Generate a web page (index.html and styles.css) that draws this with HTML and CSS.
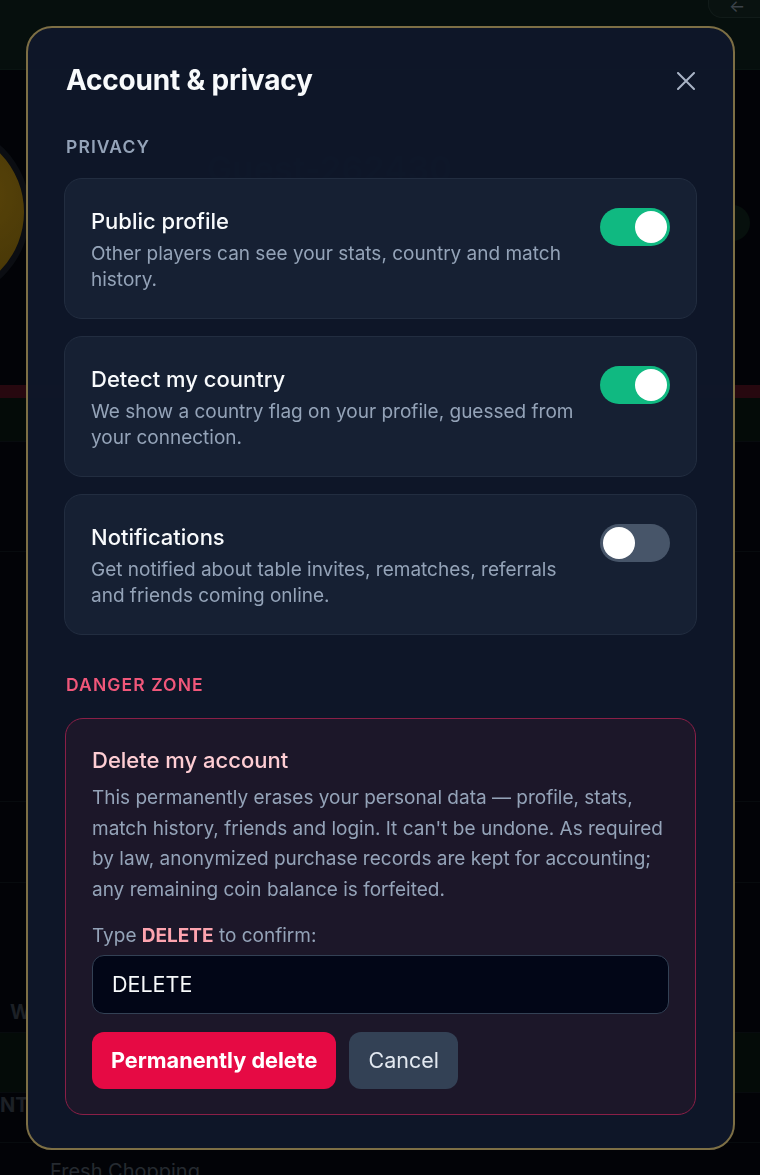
FILE: index.html
```html
<!DOCTYPE html>
<html lang="en">
<head>
    <meta charset="UTF-8">
    <meta name="viewport" content="width=device-width, initial-scale=1.0">
    <title>Account &amp; privacy</title>
    <link rel="stylesheet" href="styles.css">
</head>
<body>
    <div class="app">
        <header class="topbar">
            <div class="back-btn">&larr;</div>
        </header>
        <section class="profile">
            <div class="avatar"></div>
            <div class="profile-info">
                <div class="profile-name">Guest-262430</div>
            </div>
            <div class="profile-pill"></div>
        </section>
        <div class="hp-bar"></div>
        <div class="row row-green"></div>
        <div class="row"></div>
        <div class="stats"></div>
        <div class="row short-row"></div>
        <div class="row row-label w-row">W</div>
        <div class="row row-green short"></div>
        <div class="row row-label nt-row">NT</div>
        <div class="row row-item">Fresh Chopping</div>
    </div>

    <div class="backdrop">
        <div class="modal">
            <div class="modal-head">
                <h1>Account &amp; privacy</h1>
                <button class="close-btn" aria-label="Close">
                    <svg width="18" height="18" viewBox="0 0 18 18" fill="none" stroke="currentColor" stroke-width="2" stroke-linecap="round">
                        <path d="M1 1L17 17M17 1L1 17"/>
                    </svg>
                </button>
            </div>

            <h2 class="section-label">Privacy</h2>
            <div class="setting">
                <div class="setting-text">
                    <h3>Public profile</h3>
                    <p>Other players can see your stats, country and match history.</p>
                </div>
                <div class="toggle on"><span class="knob"></span></div>
            </div>
            <div class="setting">
                <div class="setting-text">
                    <h3>Detect my country</h3>
                    <p>We show a country flag on your profile, guessed from your connection.</p>
                </div>
                <div class="toggle on"><span class="knob"></span></div>
            </div>
            <div class="setting">
                <div class="setting-text">
                    <h3>Notifications</h3>
                    <p>Get notified about table invites, rematches, referrals and friends coming online.</p>
                </div>
                <div class="toggle"><span class="knob"></span></div>
            </div>

            <h2 class="section-label danger">Danger zone</h2>
            <div class="danger-box">
                <h3>Delete my account</h3>
                <p class="danger-desc">This permanently erases your personal data &mdash; profile, stats, match history, friends and login. It can't be undone. As required by law, anonymized purchase records are kept for accounting; any remaining coin balance is forfeited.</p>
                <label class="confirm-label" for="confirm">Type <strong>DELETE</strong> to confirm:</label>
                <input type="text" id="confirm" class="confirm-input" value="DELETE">
                <div class="actions">
                    <button class="btn btn-danger">Permanently delete</button>
                    <button class="btn btn-cancel">Cancel</button>
                </div>
            </div>
        </div>
    </div>
</body>
</html>
```

FILE: styles.css
```css
* {
    box-sizing: border-box;
}
body {
    margin: 0;
    background-color: #04060b;
    font-family: Inter, "Noto Sans", sans-serif;
    color: #f1f5f9;
    height: 1175px;
    overflow: hidden;
}

/* dimmed page behind the dialog */
.app {
    display: flex;
    flex-direction: column;
    height: 1175px;
    overflow: hidden;
}
.topbar {
    flex: none;
    height: 70px;
    background-color: #0a1714;
    border-bottom: 1px solid #0f201b;
    display: flex;
    justify-content: flex-end;
    align-items: flex-start;
}
.back-btn {
    width: 52px;
    height: 18px;
    padding-left: 20px;
    border-radius: 0 0 0 14px;
    background-color: #0e1c19;
    border-left: 1px solid #1b2a27;
    border-bottom: 1px solid #1b2a27;
    color: #5c6670;
    font-size: 17px;
    line-height: 12px;
}
.profile {
    flex: none;
    height: 310px;
    display: flex;
    align-items: flex-start;
    padding-top: 52px;
}
.avatar {
    flex: none;
    width: 180px;
    height: 180px;
    margin-left: -150px;
    border-radius: 50%;
    background: radial-gradient(circle at 70% 40%, #8a6a0e, #5a450a);
    border: 6px solid #11151c;
}
.profile-info {
    flex: 1;
    padding-left: 177px;
}
.profile-name {
    font-size: 34px;
    font-weight: 700;
    color: #18212e;
    margin-top: 26px;
}
.profile-pill {
    flex: none;
    margin-top: 83px;
    margin-right: 10px;
    width: 50px;
    height: 36px;
    border-radius: 18px;
    background-color: #0b1a14;
}
.hp-bar {
    flex: none;
    height: 13px;
    background-color: #3d0d18;
    margin-top: 5px;
}
.row {
    flex: none;
    height: 110px;
    border-bottom: 1px solid #0c1116;
}
.row-green {
    height: 44px;
    background-color: #07110d;
}
.stats {
    flex: none;
    height: 250px;
    border-bottom: 1px solid #0c1116;
}
.short-row {
    height: 81px;
}
.row-label {
    font-size: 20px;
    line-height: 24px;
    font-weight: 700;
    color: #2b323b;
    padding-left: 10px;
}
.w-row {
    height: 150px;
    padding-top: 117px;
}
.nt-row {
    height: 50px;
    padding-top: 0;
    padding-left: 0;
}
.short {
    height: 60px;
}
.row-item {
    height: 60px;
    padding: 16px 0 0 50px;
    font-size: 20px;
    color: #3a414a;
}

/* dialog */
.backdrop {
    position: fixed;
    inset: 0;
    background-color: rgba(0, 0, 0, 0.35);
}
.modal {
    position: absolute;
    top: 26px;
    left: 26px;
    width: 709px;
    height: 1124px;
    padding: 32px 36px;
    background-color: rgba(15, 23, 42, 0.96);
    border: 2px solid #7d6f45;
    border-radius: 26px;
}
.modal-head {
    display: flex;
    justify-content: space-between;
    align-items: center;
    height: 40px;
    margin-bottom: 36px;
    padding: 0 2px;
}
.modal-head h1 {
    margin: 0;
    font-size: 28px;
    font-weight: 700;
    color: #f8fafc;
    letter-spacing: -0.2px;
}
.close-btn {
    background: none;
    border: none;
    padding: 0;
    color: #a9b4c6;
    display: flex;
    margin-top: 2px;
}
.section-label {
    margin: 0 0 20px;
    padding-left: 2px;
    font-size: 17.5px;
    line-height: 22px;
    font-weight: 600;
    text-transform: uppercase;
    letter-spacing: 1.1px;
    color: #94a3b8;
}
.section-label.danger {
    color: #f0577a;
    margin-top: 39px;
    margin-bottom: 22px;
}
.setting {
    display: flex;
    align-items: flex-start;
    gap: 20px;
    padding: 28px 26px 25px;
    margin-bottom: 17px;
    background-color: #162033;
    border: 1px solid #222d40;
    border-radius: 18px;
}
.setting-text {
    flex: 1;
}
.setting h3 {
    margin: 0 0 6px;
    font-size: 22px;
    line-height: 28px;
    font-weight: 500;
    color: #f8fafc;
}
.setting p {
    margin: 0;
    font-size: 19px;
    line-height: 26px;
    color: #94a3b8;
}
.toggle {
    flex: none;
    position: relative;
    width: 70px;
    height: 38px;
    margin-top: 1px;
    border-radius: 19px;
    background-color: #475569;
}
.toggle.on {
    background-color: #10b981;
}
.knob {
    position: absolute;
    top: 3px;
    left: 3px;
    width: 32px;
    height: 32px;
    border-radius: 50%;
    background-color: #fff;
}
.toggle.on .knob {
    left: 35px;
}
.danger-box {
    margin: 0 1px;
    padding: 26px 26px 25px;
    background-color: #1c1729;
    border: 1px solid #8a1f47;
    border-radius: 18px;
}
.danger-box h3 {
    margin: 0 0 8px;
    font-size: 22px;
    line-height: 30px;
    font-weight: 500;
    color: #fecdd3;
}
.danger-desc {
    margin: 0 0 17px;
    font-size: 19px;
    line-height: 30.7px;
    color: #94a3b8;
}
.confirm-label {
    display: block;
    font-size: 19px;
    line-height: 26px;
    color: #94a3b8;
    margin-bottom: 6px;
}
.confirm-label strong {
    color: #fda4af;
    font-weight: 700;
}
.confirm-input {
    display: block;
    width: 100%;
    height: 59px;
    padding: 0 19px;
    background-color: #020617;
    border: 1px solid #334155;
    border-radius: 12px;
    font-family: inherit;
    font-size: 21.5px;
    color: #f8fafc;
    margin-bottom: 18px;
}
.actions {
    display: flex;
    gap: 13px;
}
.btn {
    height: 57px;
    padding: 0 19px;
    border: none;
    border-radius: 12px;
    font-family: inherit;
    font-size: 21.7px;
}
.btn-danger {
    background-color: #e60a44;
    color: #fff;
    font-weight: 700;
}
.btn-cancel {
    padding: 0 19px;
    font-size: 21.5px;
    background-color: #334155;
    color: #e2e8f0;
}
```
